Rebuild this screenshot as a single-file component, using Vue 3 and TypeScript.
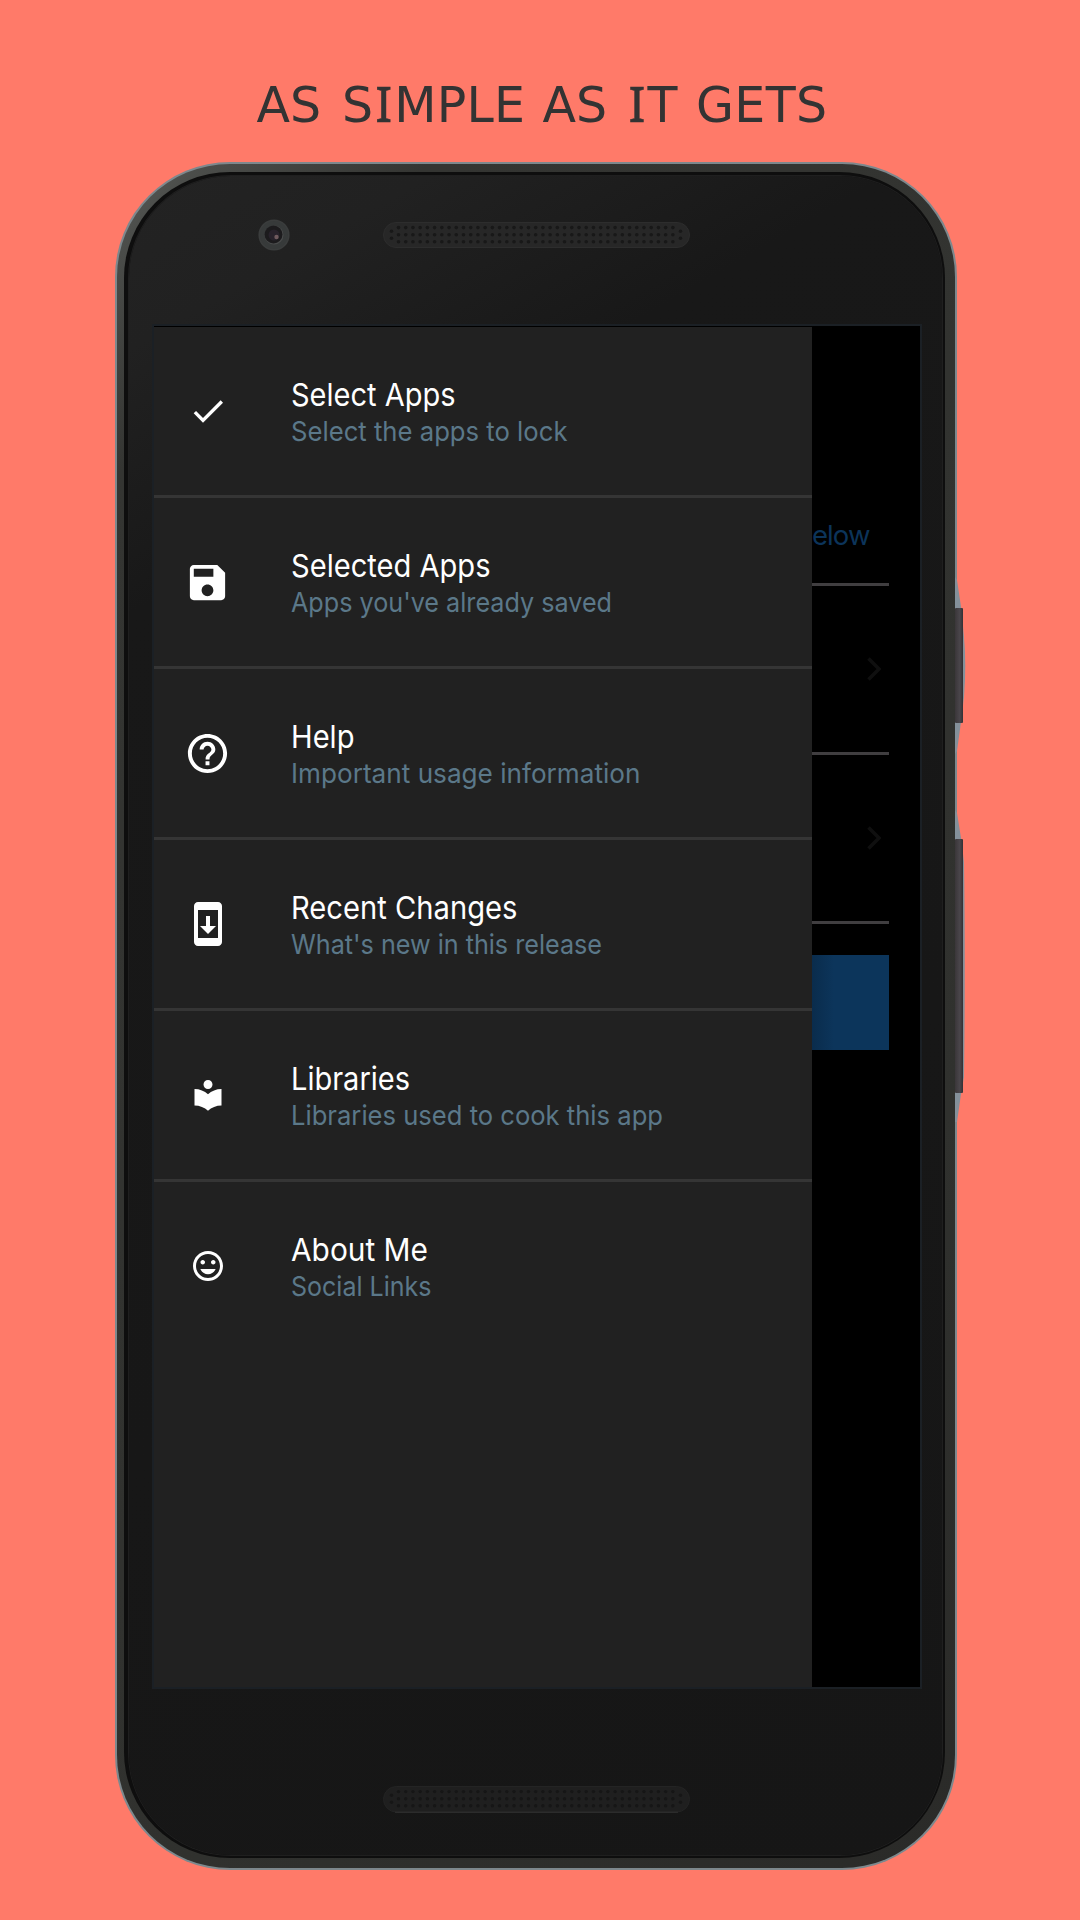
<script setup lang="ts">
interface MenuItem {
  title: string
  titleWidth: number
  note: string
  noteWidth: number
  size: number
  icon: string
}

const items: MenuItem[] = [
  {
    title: 'Select Apps', titleWidth: 164.5, note: 'Select the apps to lock', noteWidth: 276.5, size: 40,
    icon: 'M9 16.17L4.83 12l-1.42 1.41L9 19 21 7l-1.41-1.41z',
  },
  {
    title: 'Selected Apps', titleWidth: 199.5, note: "Apps you've already saved", noteWidth: 321, size: 47,
    icon: 'M17 3H5c-1.11 0-2 .9-2 2v14c0 1.1.89 2 2 2h14c1.1 0 2-.9 2-2V7l-4-4zm-5 16c-1.66 0-3-1.34-3-3s1.34-3 3-3 3 1.34 3 3-1.34 3-3 3zm3-10H5V5h10v4z',
  },
  {
    title: 'Help', titleWidth: 63.5, note: 'Important usage information', noteWidth: 349.5, size: 47,
    icon: 'M11 18h2v-2h-2v2zm1-16C6.48 2 2 6.48 2 12s4.48 10 10 10 10-4.48 10-10S17.52 2 12 2zm0 18c-4.41 0-8-3.59-8-8s3.59-8 8-8 8 3.59 8 8-3.59 8-8 8zm0-14c-2.21 0-4 1.79-4 4h2c0-1.1.9-2 2-2s2 .9 2 2c0 2-3 1.75-3 5h2c0-2.25 3-2.5 3-5 0-2.21-1.79-4-4-4z',
  },
  {
    title: 'Recent Changes', titleWidth: 226.5, note: "What's new in this release", noteWidth: 311, size: 48,
    icon: 'M17 1.01L7 1c-1.1 0-2 .9-2 2v18c0 1.1.9 2 2 2h10c1.1 0 2-.9 2-2V3c0-1.1-.9-1.99-2-1.99zM17 19H7V5h10v14zm-1-6h-3V8h-2v5H8l4 4 4-4z',
  },
  {
    title: 'Libraries', titleWidth: 119, note: 'Libraries used to cook this app', noteWidth: 372, size: 36,
    icon: 'M12 11.55C9.64 9.35 6.48 8 3 8v11c3.48 0 6.64 1.35 9 3.55 2.36-2.19 5.52-3.55 9-3.55V8c-3.48 0-6.64 1.35-9 3.55zM12 8c1.66 0 3-1.34 3-3s-1.34-3-3-3-3 1.34-3 3 1.34 3 3 3z',
  },
  {
    title: 'About Me', titleWidth: 137, note: 'Social Links', noteWidth: 140.5, size: 36,
    icon: 'M11.99 2C6.47 2 2 6.48 2 12s4.47 10 9.99 10C17.52 22 22 17.52 22 12S17.52 2 11.99 2zM12 20c-4.42 0-8-3.58-8-8s3.58-8 8-8 8 3.58 8 8-3.58 8-8 8zm3.5-9c.83 0 1.5-.67 1.5-1.5S16.33 8 15.5 8 14 8.67 14 9.5s.67 1.5 1.5 1.5zm-7 0c.83 0 1.5-.67 1.5-1.5S9.33 8 8.5 8 7 8.67 7 9.5 7.67 11 8.5 11zm3.5 6.5c2.33 0 4.31-1.46 5.11-3.5H6.89c.8 2.04 2.78 3.5 5.11 3.5z',
  },
]

// Perforation of the two speaker grilles
const holes: { x: number; y: number }[] = []
for (let c = 0; c < 39; c++) {
  for (let r = 0; r < 3; r++) holes.push({ x: 15.5 + c * 7.22, y: 5.6 + r * 7.1 })
}
for (const x of [8.5, 297.5]) holes.push({ x, y: 9.2 }, { x, y: 16.2 })
</script>

<template>
  <main class="poster">
    <h1 class="headline">
      <span class="w1">AS</span><span class="w2">S<i>I</i>MPLE</span><span class="w3">AS</span><span class="w4"><i>I</i>T</span><span class="w5">GETS</span>
    </h1>

    <div class="device">
      <svg class="keys" width="16" height="560" viewBox="0 0 16 560">
        <defs>
          <linearGradient id="key" x1="0" x2="1" y1="0" y2="0">
            <stop offset="0" stop-color="#3a3639" />
            <stop offset=".6" stop-color="#4a464b" />
            <stop offset="1" stop-color="#343034" />
          </linearGradient>
        </defs>
        <path d="M0 15L2 18 6.500 48 9 75Q11.500 102 9 135L6 160 2 189 0 192z" fill="#84909a" />
        <path d="M0 248L2 251 6.500 279 9 300Q10.500 400 9 515L6 532 2 560 0 560z" fill="#84909a" />
        <rect x="0" y="46" width="8" height="115" rx="1" fill="url(#key)" />
        <rect x="0" y="277" width="8" height="254" rx="1" fill="url(#key)" />
      </svg>
      <div class="bevel">
        <div class="groove">
          <div class="face">
            <div class="top-bezel">
              <svg class="camera" width="32" height="32" viewBox="0 0 32 32">
                <circle cx="16" cy="16" r="15.600" fill="#3b3d3d" />
                <circle cx="16" cy="16" r="14" fill="#373a3a" />
                <circle cx="16" cy="16" r="9.500" fill="#4a4c4c" />
                <circle cx="15.500" cy="15.500" r="9" fill="#1c1b1d" />
                <circle cx="16" cy="16" r="5.500" fill="#28222b" />
                <circle cx="18.500" cy="18" r="2.200" fill="#705a5e" />
              </svg>
              <svg class="grille" width="307" height="26" viewBox="0 0 307 26">
                <rect x=".5" y=".5" width="306" height="25" rx="12.500" fill="#272727" stroke="#2d2d2d" />
                <circle v-for="(h, i) in holes" :key="i" :cx="h.x" :cy="h.y" r="1.800" fill="#181818" />
              </svg>
            </div>

            <div class="screen">
              <nav class="drawer">
                <div v-for="item in items" :key="item.title" class="row">
                  <div class="icon">
                    <svg :width="item.size" :height="item.size" viewBox="0 0 24 24"><path :d="item.icon" fill="#fff" /></svg>
                  </div>
                  <svg class="label" width="400" height="90" viewBox="0 0 400 90">
                    <text class="title" x="0" y="39.500" :textLength="item.titleWidth" lengthAdjust="spacingAndGlyphs">{{ item.title }}</text>
                    <text class="note" x="0" y="74.500" :textLength="item.noteWidth" lengthAdjust="spacingAndGlyphs">{{ item.note }}</text>
                  </svg>
                </div>
              </nav>
              <section class="behind">
                <div class="hint"><span>elow</span></div>
                <div v-for="n in 2" :key="n" class="entry">
                  <svg width="14" height="24" viewBox="0 0 14 24"><path d="M1.500 1.500L12 12 1.500 22.500" fill="none" stroke="#0f0f0f" stroke-width="3.500" /></svg>
                </div>
                <div class="action"></div>
              </section>
            </div>

            <svg class="grille bottom" width="307" height="27" viewBox="0 0 307 27">
              <rect x=".5" y=".5" width="306" height="25.500" rx="12.750" fill="#1f1f1f" stroke="#242424" />
              <path d="M12 26.200H295" stroke="#333" />
              <circle v-for="(h, i) in holes" :key="i" :cx="h.x" :cy="h.y" r="1.700" fill="#161616" />
            </svg>
          </div>
        </div>
      </div>
    </div>
  </main>
</template>

<style>
body {
  background: #ff7a69;
}
</style>

<style scoped>
.poster {
  width: 1080px;
  height: 1920px;
  overflow: hidden;
  background: #ff7a69;
}
.headline {
  display: flex;
  height: 162px;
  margin: 0;
  padding: 77px 0 0 256.500px;
  box-sizing: border-box;
  font: 400 49px/58px 'DejaVu Sans', sans-serif;
  color: #333;
  white-space: nowrap;
}
.headline i {
  font-family: 'Noto Sans', sans-serif;
  font-style: normal;
  font-size: 50px;
  line-height: 1px;
  letter-spacing: 2px;
  margin-left: 2px;
  -webkit-text-stroke: .5px #333;
}
.w1 { width: 85.500px; }
.w2 { width: 200.500px; letter-spacing: .2px; }
.w3 { width: 84px; }
.w4 { width: 69.500px; }
.w5 { letter-spacing: .4px; }
.device {
  position: relative;
  width: 842px;
  height: 1708px;
  margin-left: 115px;
  padding: 2px;
  box-sizing: border-box;
  border-radius: 115px;
  background: #7d888d;
}
.keys {
  position: absolute;
  left: 840px;
  top: 400px;
}
.bevel {
  height: 1704px;
  padding: 8px 10px 10px 7px;
  box-sizing: border-box;
  border-radius: 113px;
  background: linear-gradient(135deg, #60625f 0, #4b4d4a 60px, #343532 220px, #30312e 70%, #2a2a28 100%);
}
.groove {
  height: 1686px;
  padding: 4px 3px 3px 5px;
  box-sizing: border-box;
  border-radius: 106px;
  background: #0e0e0e;
}
.face {
  display: flex;
  flex-direction: column;
  height: 1679px;
  border-radius: 102px;
  background: linear-gradient(150deg, #232323 0, #212121 150px, #181818 380px, #161616 100%);
  box-shadow: 0 0 0 1px #1f1f1f;
}
.top-bezel {
  display: flex;
  align-items: center;
  height: 148px;
  padding: 0 0 30px 128.500px;
  box-sizing: border-box;
}
.grille {
  display: block;
  margin-left: 93.500px;
}
.bottom {
  margin: 97px 0 0 254px;
}
.screen {
  display: flex;
  width: 766px;
  height: 1361px;
  margin-left: 23px;
  border: 2px solid #1b2025;
  background: #000;
}
.drawer {
  position: relative;
  z-index: 1;
  width: 658px;
  margin-top: 1px;
  background: #212121;
}
.row {
  display: flex;
  align-items: center;
  height: 171px;
  box-sizing: border-box;
  border-bottom: 3px solid #353535;
}
.row:last-child {
  border-bottom-color: transparent;
}
.icon {
  display: flex;
  justify-content: center;
  width: 107px;
  margin-right: 30px;
}
.label {
  overflow: visible;
}
.title {
  font: 400 31.500px Inter, sans-serif;
  fill: #fff;
}
.note {
  font: 400 27.500px Inter, sans-serif;
  fill: #5b7889;
}
.behind {
  width: 108px;
  padding-right: 31px;
  box-sizing: border-box;
}
.hint {
  display: flex;
  justify-content: flex-end;
  align-items: flex-end;
  height: 260px;
  padding: 0 19.500px 31px 0;
  box-sizing: border-box;
  border-bottom: 3px solid #403e40;
  font: 400 27.500px/34px Inter, sans-serif;
  letter-spacing: -.9px;
  color: #0c345a;
}
.entry {
  display: flex;
  align-items: center;
  justify-content: flex-end;
  height: 168.800px;
  padding-right: 8px;
  box-sizing: border-box;
  border-bottom: 3px solid #403e40;
}
.action {
  height: 95px;
  margin-top: 31px;
  background: linear-gradient(90deg, #0a2c4c, #0c355b 22px);
}
</style>
